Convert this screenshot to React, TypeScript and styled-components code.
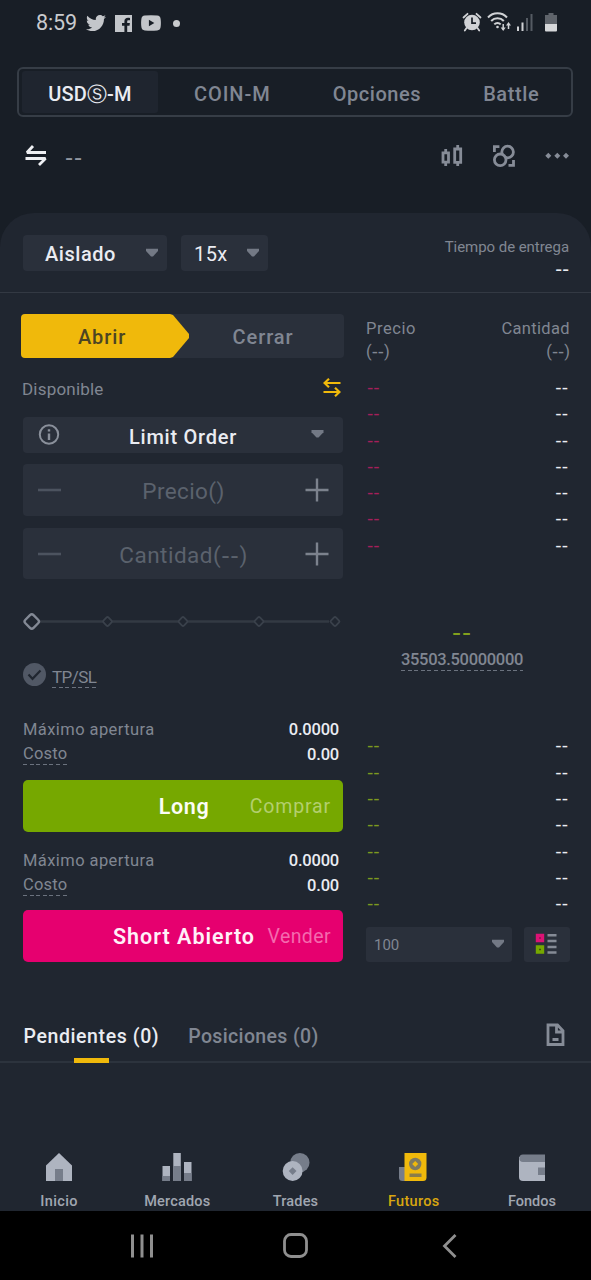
import React from "react";
import styled, { createGlobalStyle, css } from "styled-components";
import { FaTwitter } from "react-icons/fa";

const c = {
  top: "#181e26",
  panel: "#202630",
  field: "#2a303b",
  grey: "#808692",
  dim: "#5b626d",
  white: "#eaecf2",
  yellow: "#f0b90b",
  green: "#76a800",
  pink: "#e6006f",
};

const Global = createGlobalStyle`
  *, *::before, *::after { box-sizing: border-box; }
  body { margin: 0; background: #000; font-family: Roboto, "Liberation Sans", sans-serif; }
  svg { display: block; flex: none; }
`;

const Screen = styled.div`
  width: 100%;
  height: 1280px;
  display: flex;
  flex-direction: column;
  overflow: hidden;
  background: ${c.top};
`;

interface TextProps {
  $size?: number;
  $ls?: number;
  $color?: string;
  $weight?: number;
}
const Text = styled.span<TextProps>`
  font-size: ${(p) => p.$size ?? 16.5}px;
  letter-spacing: ${(p) => p.$ls ?? 0}px;
  color: ${(p) => p.$color ?? c.grey};
  font-weight: ${(p) => p.$weight ?? 400};
  line-height: 20px;
  white-space: nowrap;
`;

const Dashes = styled(Text)`
  font-family: "DejaVu Sans", sans-serif;
`;

const Dotted = styled.span<{ $w: number }>`
  display: inline-flex;
  width: ${(p) => p.$w}px;
  padding-bottom: 1px;
  background: repeating-linear-gradient(90deg, #6b727e 0 4px, transparent 4px 6.6px) 0 100% / 100% 1px no-repeat;
`;

/* Status bar */
const StatusBar = styled.header`
  height: 46px;
  flex: none;
  display: flex;
  align-items: center;
  padding: 0 34px 0 36px;
`;
const StatusLeft = styled.div`
  display: flex;
  align-items: center;
  gap: 9px;
  flex: 1;
`;
const StatusRight = styled.div`
  display: flex;
  align-items: center;
  padding-bottom: 2px;
`;
const WifiSlot = styled.span`
  margin: 0 6px 0 5px;
`;
const BatterySlot = styled.span`
  margin-left: 12px;
`;
const MoreDot = styled.i`
  width: 7px;
  height: 7px;
  border-radius: 50%;
  background: #c9cbce;
  margin-left: 3px;
`;

/* Market tabs */
const MarketTabs = styled.nav`
  margin: 21px 18px 0 17px;
  height: 50px;
  flex: none;
  display: flex;
  align-items: center;
  border: 2px solid #363d46;
  border-radius: 6px;
  padding: 0 0 0 3px;
`;
const MarketTab = styled.div<{ $active?: boolean }>`
  height: 42px;
  flex: none;
  display: flex;
  align-items: center;
  margin-right: 62px;
  padding-top: 3px;
  ${(p) =>
    p.$active &&
    css`
      width: 136px;
      margin-right: 36px;
      justify-content: center;
      background: #1f252f;
      border-radius: 3px;
    `}
`;
const CircledS = styled.span`
  font-family: "DejaVu Sans", sans-serif;
  font-size: 20px;
  font-weight: 400;
  line-height: 0;
  letter-spacing: 0;
`;

const SymbolRow = styled.div`
  height: 96px;
  flex: none;
  display: flex;
  align-items: flex-start;
  padding: 26px 22px 0 24px;
`;
const SymbolName = styled.div`
  flex: 1;
  padding: 4px 0 0 17px;
`;
const SymbolTools = styled.div`
  display: flex;
  align-items: center;
  gap: 29px;
  padding-top: 1px;
`;

/* Main panel */
const Panel = styled.main`
  flex: 1;
  min-height: 0;
  display: flex;
  flex-direction: column;
  background: ${c.panel};
  border-radius: 34px 34px 0 0;
`;
const ModeBar = styled.div`
  height: 80px;
  flex: none;
  display: flex;
  align-items: flex-start;
  padding: 22px 22px 0 23px;
  border-bottom: 1px solid #333943;
`;
const Picker = styled.div<{ $w: number; $pl: number }>`
  width: ${(p) => p.$w}px;
  height: 36px;
  margin-right: 14px;
  padding: 2px 8px 0 ${(p) => p.$pl}px;
  display: flex;
  align-items: center;
  justify-content: space-between;
  background: ${c.field};
  border-radius: 4px;
`;
const PickerCaret = styled.span`
  padding-bottom: 4px;
`;
const Delivery = styled.div`
  flex: 1;
  display: flex;
  flex-direction: column;
  align-items: flex-end;
  gap: 2px;
  padding-top: 2px;
`;

const Trade = styled.section`
  display: flex;
  justify-content: space-between;
  height: 669px;
  flex: none;
  padding: 0 21px 0 23px;
`;
const OrderForm = styled.div`
  width: 320px;
  display: flex;
  flex-direction: column;
`;
const OpenClose = styled.div`
  height: 44px;
  margin: 21px -1px 0 -2px;
  display: flex;
  background: ${c.field};
  border-radius: 4px;
`;
const OpenTab = styled.div`
  width: 169px;
  display: grid;
  place-items: center;
  padding: 2px 7px 0 0;
  background: ${c.yellow};
  border-radius: 4px 0 0 4px;
  clip-path: polygon(0 0, 149px 0, 152px 1px, 168px 20px, 168px 24px, 152px 43px, 149px 44px, 0 44px);
`;
const CloseTab = styled.div`
  flex: 1;
  display: grid;
  place-items: center;
  padding: 2px 8px 0 0;
`;
const Available = styled.div`
  height: 20px;
  margin: 21px 2px 0 -1px;
  display: flex;
  align-items: center;
  justify-content: space-between;
`;
const TransferSlot = styled.span`
  padding-bottom: 2px;
`;
const Field = styled.div<{ $h: number; $mt: number }>`
  height: ${(p) => p.$h}px;
  margin-top: ${(p) => p.$mt}px;
  padding: 0 14px;
  display: flex;
  align-items: center;
  justify-content: space-between;
  background: ${c.field};
  border-radius: 4px;
`;
const FieldLabel = styled.div`
  padding-top: 5px;
  line-height: 20px;
`;
const SliderRow = styled.div`
  height: 20px;
  margin-top: 32px;
`;
const TpSl = styled.div`
  height: 25px;
  margin-top: 32px;
  display: flex;
  align-items: flex-start;
  gap: 6px;
`;
const TpSlLabel = styled.div`
  padding-top: 4px;
  line-height: 0;
`;
const Figures = styled.dl<{ $mt: number }>`
  margin: ${(p) => p.$mt}px 4px 0 0;
`;
const Figure = styled.div`
  height: 25px;
  display: flex;
  align-items: center;
  justify-content: space-between;
`;
const Submit = styled.button<{ $bg: string; $mt: number }>`
  height: 52px;
  margin-top: ${(p) => p.$mt}px;
  padding: 3px 12px 0;
  border: 0;
  border-radius: 5px;
  background: ${(p) => p.$bg};
  display: flex;
  align-items: center;
  justify-content: flex-end;
  font-family: inherit;
`;
const SubmitMain = styled(Text)<{ $gap: number }>`
  margin-right: ${(p) => p.$gap}px;
`;

/* Order book */
const Book = styled.div`
  width: 204px;
  display: flex;
  flex-direction: column;
`;
const BookHead = styled.div`
  margin-top: 23.5px;
  display: flex;
  justify-content: space-between;
`;
const BookHeadCell = styled.div<{ $end?: boolean }>`
  display: flex;
  flex-direction: column;
  align-items: ${(p) => (p.$end ? "flex-end" : "flex-start")};
  & > span {
    line-height: 23.5px;
  }
`;
const BookRows = styled.div<{ $mt: number }>`
  margin-top: ${(p) => p.$mt}px;
`;
const BookRow = styled.div`
  height: 26.28px;
  display: flex;
  align-items: center;
  justify-content: space-between;
  padding: 0 2px 0 1px;
`;
const MidPrice = styled.div`
  height: 174.5px;
  padding: 65px 12px 0 0;
  display: flex;
  flex-direction: column;
  align-items: center;
  gap: 7.5px;
`;
const BookTools = styled.div`
  margin-top: 10.5px;
  display: flex;
  justify-content: space-between;
`;
const Depth = styled.div`
  width: 146px;
  height: 35px;
  padding: 2px 7px 0 8px;
  display: flex;
  align-items: center;
  justify-content: space-between;
  background: ${c.field};
  border-radius: 3px;
`;
const DepthCaret = styled.span`
  padding-bottom: 4px;
`;
const BookMode = styled.div`
  width: 46px;
  height: 35px;
  display: grid;
  place-items: center;
  padding-right: 2px;
  background: ${c.field};
  border-radius: 3px;
`;

/* Orders tabs */
const OrdersTabs = styled.div`
  height: 53px;
  margin-top: 48px;
  flex: none;
  display: flex;
  align-items: center;
  gap: 29px;
  padding: 2px 26.5px 0 23.5px;
  border-bottom: 2px solid #2c333d;
`;
const OrdersTab = styled.div<{ $active?: boolean }>`
  position: relative;
  ${(p) =>
    p.$active &&
    css`
      &::after {
        content: "";
        position: absolute;
        left: 50.5px;
        bottom: -16px;
        width: 35px;
        height: 5px;
        background: ${c.yellow};
      }
    `}
`;
const OrdersDoc = styled.div`
  margin-left: auto;
  padding-bottom: 4px;
`;

/* Bottom bars */
const AppNav = styled.nav`
  margin-top: auto;
  height: 58px;
  display: flex;
  overflow: hidden;
`;
const NavItem = styled.div`
  flex: 1;
  display: flex;
  flex-direction: column;
  align-items: center;
  gap: 11px;
`;
const SystemNav = styled.footer`
  height: 69px;
  flex: none;
  background: #000;
  display: flex;
  justify-content: center;
  align-items: center;
  gap: 129px;
`;

const Caret = () => (
  <svg width="14" height="9" viewBox="0 0 14 9">
    <path d="M1 .8h12v2.3L8 8.4H6L1 3.100z" fill="#737985" />
  </svg>
);
const Plus = () => (
  <svg width="24" height="24" viewBox="0 0 24 24" stroke="#7c828d" strokeWidth="2.4">
    <path d="M0.500 12h23M12 .5v23" />
  </svg>
);
const Minus = () => (
  <svg width="25" height="24" viewBox="0 0 25 24" stroke="#4c535f" strokeWidth="2.600">
    <path d="M1 12h23" />
  </svg>
);

const marks = [84.5, 160, 236, 312];

const icons = {
  home: (
    <svg width="28" height="28" viewBox="0 0 28 28">
      <path d="M14 0 27 12.500V28H1V12.500z" fill="#aeb4c0" />
      <path d="M10 16h8v12h-8z" fill="#767d8a" />
    </svg>
  ),
  bars: (
    <svg width="30" height="28" viewBox="0 0 30 28">
      <path d="M.5 13h7.500v15H.5zM11.300 0h7.500v28h-7.500zM22 9h7.500v19H22z" fill="#aeb4c0" />
      <path d="M.5 23h7.500v5H.5zM11.300 13h7.500v15h-7.500zM22 20h7.500v8H22z" fill="#767d8a" />
    </svg>
  ),
  coins: (
    <svg width="28" height="28" viewBox="0 0 28 29">
      <circle cx="18" cy="10" r="10" fill="#767d8a" />
      <circle cx="10.500" cy="18.700" r="10.300" fill="#aeb4c0" />
      <path d="m10.500 14.700 4 4-4 4-4-4z" fill="#767d8a" />
    </svg>
  ),
  futures: (
    <svg width="30" height="28" viewBox="0 0 30 28">
      <path d="M0 14h8v14H3.500A3.500 3.500 0 0 1 0 24.500z" fill="#767d8a" />
      <path d="M5.500 0h22v24.500a3.500 3.500 0 0 1-3.500 3.500H5.500V0z" fill="#f0b90b" />
      <circle cx="16.200" cy="11" r="6.200" fill="#7f7a60" />
      <path d="m16.200 8 3 3-3 3-3-3z" fill="#f0b90b" />
      <path d="M10.500 20.500h12v3.500h-12z" fill="#8a7d4a" />
    </svg>
  ),
  wallet: (
    <svg width="28" height="28" viewBox="0 0 28 28">
      <path d="M1 4h26v24H5a4 4 0 0 1-4-4z" fill="#aeb4c0" />
      <path d="M5 1.500h22V9H5a3.700 3.700 0 0 1 0-7.500z" fill="#767d8a" />
      <path d="M20 14.500h7V22h-7z" fill="#767d8a" />
    </svg>
  ),
};

const navItems = [
  { label: "Inicio", icon: icons.home, ls: 0.4 },
  { label: "Mercados", icon: icons.bars, ls: 0.2 },
  { label: "Trades", icon: icons.coins, ls: 0.15 },
  { label: "Futuros", icon: icons.futures, ls: 0.3, active: true },
  { label: "Fondos", icon: icons.wallet, ls: 0 },
];

const OrderFigures = ({ mt }: { mt: number }) => (
  <Figures $mt={mt}>
    <Figure>
      <Text $ls={0.42}>Máximo apertura</Text>
      <Text $ls={-0.2} $color={c.white} $weight={500}>0.0000</Text>
    </Figure>
    <Figure>
      <Dotted $w={44}>
        <Text $ls={0.2}>Costo</Text>
      </Dotted>
      <Text $ls={-0.2} $color={c.white} $weight={500}>0.00</Text>
    </Figure>
  </Figures>
);

const Rows = ({ color, mt }: { color: string; mt: number }) => (
  <BookRows $mt={mt}>
    {Array.from({ length: 7 }, (_, i) => (
      <BookRow key={i}>
        <Dashes $size={17.5} $color={color}>--</Dashes>
        <Dashes $size={17.5} $color={c.white}>--</Dashes>
      </BookRow>
    ))}
  </BookRows>
);

export default function App() {
  return (
    <>
      <Global />
      <Screen>
        <StatusBar>
          <StatusLeft>
            <Text $size={21.5} $ls={-0.1} $color="#c9cbce">8:59</Text>
            <FaTwitter size={20} color="#c3c6ca" />
            <svg width="17" height="17" viewBox="0 0 17 17">
              <path d="M0 0h17v17h-4.800v-6.300h2.300l.4-2.600h-2.700V6.500c0-.8.300-1.300 1.400-1.300h1.400V2.900C14.500 2.800 13.800 2.700 13 2.700c-2.200 0-3.600 1.300-3.600 3.600v1.800H7v2.600h2.400V17H0z" fill="#c3c6ca" />
            </svg>
            <svg width="20" height="16" viewBox="0 0 21 16" preserveAspectRatio="none">
              <path fillRule="evenodd" d="M4 .6Q10.500-.2 17 .6q3.300.3 3.600 3.400.6 4 0 8-.3 3.100-3.600 3.400-6.500.8-13 0Q.7 15.100.4 12q-.6-4 0-8Q.7.900 4 .600zM8.300 4.800v6.400L14 8z" fill="#c3c6ca" />
            </svg>
            <MoreDot />
          </StatusLeft>
          <StatusRight>
            <svg width="20" height="20" viewBox="0 0 20 20" fill="none" stroke="#d0d2d5" strokeWidth="1.800">
              <circle cx="10" cy="10.500" r="7.800" fill="#d0d2d5" stroke="none" />
              <path d="M1.500 5.500 5.500 1.800M18.500 5.500l-4-3.700M4.500 16 2.800 18.500M15.500 16l1.700 2.500" strokeLinecap="round" />
              <path d="M10 5.500v5.700h4" stroke={c.top} strokeWidth="1.700" />
            </svg>
            <WifiSlot>
              <svg width="24" height="20" viewBox="0 0 24 20" fill="none" stroke="#d0d2d5" strokeWidth="2">
                <path d="M1 5.500a13 13 0 0 1 19 0M4.200 9a8.600 8.600 0 0 1 12.600 0M7.300 12.400a4.600 4.600 0 0 1 6.400 0" />
                <circle cx="10.500" cy="15" r="1.300" fill="#d0d2d5" stroke="none" />
                <path d="M16.200 12v5.500M21.500 17v-5" strokeWidth="1.500" />
                <path d="M13.700 15.500h5l-2.500 3.500zM19 13.500h5L21.500 10z" fill="#d0d2d5" stroke="none" />
              </svg>
            </WifiSlot>
            <svg width="16" height="18" viewBox="0 0 16 18">
              <path d="M0 13.500h2V18H0zM4.500 9.500h2V18h-2z" fill="#d0d2d5" />
              <path d="M9 5h2v13H9zM13.500 1h2v17h-2z" fill="#555b63" />
            </svg>
            <BatterySlot>
              <svg width="12" height="19" viewBox="0 0 12 19">
                <path d="M3.500 0h5v2H12v9H0V2h3.500z" fill="#5f646b" />
                <path d="M0 11h12v6.500a1 1 0 0 1-1 1H1a1 1 0 0 1-1-1z" fill="#d6d8da" />
              </svg>
            </BatterySlot>
          </StatusRight>
        </StatusBar>

        <MarketTabs>
          <MarketTab $active>
            <Text $size={20} $ls={0.2} $color={c.white} $weight={500}>
              USD<CircledS>Ⓢ</CircledS>-M
            </Text>
          </MarketTab>
          <MarketTab><Text $size={20} $ls={0.95} $weight={500}>COIN-M</Text></MarketTab>
          <MarketTab><Text $size={20} $ls={0.55} $weight={500}>Opciones</Text></MarketTab>
          <MarketTab><Text $size={20} $ls={0.6} $weight={500}>Battle</Text></MarketTab>
        </MarketTabs>

        <SymbolRow>
          <svg width="24" height="25" viewBox="0 0 24 25" fill="none" stroke="#eef0f3" strokeWidth="2.800">
            <path d="M22 9.500H3L9 3M1.500 15.500h20l-6.500 6.500" strokeLinejoin="bevel" />
          </svg>
          <SymbolName>
            <Dashes $size={22.5} $ls={0.8} $color="#8f959f">--</Dashes>
          </SymbolName>
          <SymbolTools>
            <svg width="22" height="24" viewBox="0 0 22 24" fill="none" stroke="#868c97" strokeWidth="2.800">
              <path d="M2 8.900h5.500v9.200H2zM4.700 5v4M4.700 18v4M13.700 5h6v13.400h-6zM16.700 1v4M16.700 18v4" />
            </svg>
            <svg width="24" height="24" viewBox="0 0 24 24" fill="none" stroke="#868c97" strokeWidth="2.800">
              <circle cx="15.600" cy="8" r="5.800" />
              <circle cx="8.200" cy="15.800" r="5.800" fill={c.top} />
              <path d="M2.400 8V2.600h5M21.500 16v5.300h-5" />
            </svg>
            <svg width="24" height="8" viewBox="0 0 24 8" fill="#868c97">
              <path d="m3.300.8 3 3-3 3-3-3zM12.300.8l3 3-3 3-3-3zM21 .8l3 3-3 3-3-3z" />
            </svg>
          </SymbolTools>
        </SymbolRow>

        <Panel>
          <ModeBar>
            <Picker $w={144} $pl={22}>
              <Text $size={20} $ls={0.55} $color={c.white} $weight={500}>Aislado</Text>
              <PickerCaret><Caret /></PickerCaret>
            </Picker>
            <Picker $w={87} $pl={13}>
              <Text $size={20} $ls={0.4} $color={c.white}>15x</Text>
              <PickerCaret><Caret /></PickerCaret>
            </Picker>
            <Delivery>
              <Text $size={15} $ls={-0.05}>Tiempo de entrega</Text>
              <Dashes $size={19} $color={c.white}>--</Dashes>
            </Delivery>
          </ModeBar>

          <Trade>
            <OrderForm>
              <OpenClose>
                <OpenTab><Text $size={20} $ls={0.9} $color="#4d4523" $weight={500}>Abrir</Text></OpenTab>
                <CloseTab><Text $size={20} $ls={0.9} $weight={500}>Cerrar</Text></CloseTab>
              </OpenClose>
              <Available>
                <Text $size={17} $ls={0.2}>Disponible</Text>
                <TransferSlot>
                  <svg width="18" height="20" viewBox="0 0 18 20" fill="none" stroke={c.yellow} strokeWidth="2.2">
                    <path d="M17.500 5H1.500M6 .8 1.500 5 6 9.300M.5 14h16M12 9.700l4.500 4.300-4.500 4.200" />
                  </svg>
                </TransferSlot>
              </Available>
              <Field $h={36} $mt={18}>
                <svg width="23" height="22" viewBox="0 0 23 22" fill="none" stroke="#8a909b" strokeWidth="2">
                  <circle cx="12" cy="10.500" r="9.200" />
                  <path d="M12 9.500V16M12 5.200v2.300" strokeWidth="2.400" />
                </svg>
                <FieldLabel><Text $size={20} $ls={0.75} $color={c.white} $weight={500}>Limit Order</Text></FieldLabel>
                <svg width="23" height="12" viewBox="0 0 23 12">
                  <path d="M5.500 1h12v2.300l-5 5.200h-2l-5-5.200z" fill="#737985" />
                </svg>
              </Field>
              <Field $h={52} $mt={11}>
                <Minus />
                <FieldLabel><Text $size={22.5} $ls={0.4} $color={c.dim}>Precio()</Text></FieldLabel>
                <Plus />
              </Field>
              <Field $h={51} $mt={12}>
                <Minus />
                <FieldLabel>
                  <Text $size={22.5} $ls={0.5} $color={c.dim}>
                    Cantidad(<Dashes $size={23.5} $ls={0.6} $color={c.dim}>--</Dashes>)
                  </Text>
                </FieldLabel>
                <Plus />
              </Field>
              <SliderRow>
                <svg width="320" height="20" viewBox="0 0 320 20" fill="none">
                  <path d="M17 10.500H306" stroke="#333a43" strokeWidth="2.500" />
                  <rect x="3" y="4.700" width="11.500" height="11.500" rx="2.500" transform="rotate(45 8.700 10.500)" stroke="#838995" strokeWidth="2.400" />
                  {marks.map((x) => (
                    <rect key={x} x={x - 3.5} y="7" width="7" height="7" rx="1.300" transform={`rotate(45 ${x} 10.500)`} fill={c.panel} stroke="#3a414b" strokeWidth="1.800" />
                  ))}
                </svg>
              </SliderRow>
              <TpSl>
                <svg width="23" height="23" viewBox="0 0 23 23">
                  <circle cx="11.500" cy="11.500" r="11.500" fill="#515865" />
                  <path d="m5.500 11.500 4 4.300L17.500 7.500" fill="none" stroke={c.panel} strokeWidth="2.200" />
                </svg>
                <TpSlLabel>
                  <Dotted $w={44}><Text $size={17} $ls={-0.55}>TP/SL</Text></Dotted>
                </TpSlLabel>
              </TpSl>
              <OrderFigures mt={29} />
              <Submit $bg={c.green} $mt={12.5}>
                <SubmitMain $size={21.5} $ls={0.6} $gap={40.5} $color="#fbfdf5" $weight={600}>Long</SubmitMain>
                <Text $size={19.5} $ls={0.85} $color="#b3cf6e">Comprar</Text>
              </Submit>
              <OrderFigures mt={16.5} />
              <Submit $bg={c.pink} $mt={11.5}>
                <SubmitMain $size={21.5} $ls={1} $gap={12.5} $color="#fff0f8" $weight={600}>Short Abierto</SubmitMain>
                <Text $size={19.5} $ls={0.4} $color="#f46aae">Vender</Text>
              </Submit>
            </OrderForm>

            <Book>
              <BookHead>
                <BookHeadCell>
                  <Text $ls={0.55}>Precio</Text>
                  <Text>(<Dashes $size={17}>--</Dashes>)</Text>
                </BookHeadCell>
                <BookHeadCell $end>
                  <Text $ls={0.35}>Cantidad</Text>
                  <Text>(<Dashes $size={17}>--</Dashes>)</Text>
                </BookHeadCell>
              </BookHead>
              <Rows color="#a51f5a" mt={10.5} />
              <MidPrice>
                <Dashes $size={25} $ls={1} $color="#82a01c">--</Dashes>
                <Dotted $w={122}><Text $ls={-0.32} $weight={500}>35503.50000000</Text></Dotted>
              </MidPrice>
              <Rows color="#7d991f" mt={0} />
              <BookTools>
                <Depth>
                  <Text $size={15}>100</Text>
                  <DepthCaret><Caret /></DepthCaret>
                </Depth>
                <BookMode>
                  <svg width="22" height="22" viewBox="0 0 22 22">
                    <path d="M2.500 2.500h5v5h-5z" fill="#7c1147" stroke="#dc1275" strokeWidth="3.400" />
                    <path d="M2.500 14h5v5h-5z" fill="#32430f" stroke="#76a800" strokeWidth="3.400" />
                    <path d="M12.500 2.200h9M12.500 8h9M12.500 14h9M12.500 19.500h9" stroke="#858b96" strokeWidth="2.600" />
                  </svg>
                </BookMode>
              </BookTools>
            </Book>
          </Trade>

          <OrdersTabs>
            <OrdersTab $active><Text $size={19.5} $ls={0.6} $color={c.white} $weight={500}>Pendientes (0)</Text></OrdersTab>
            <OrdersTab><Text $size={19.5} $ls={0.35} $weight={500}>Posiciones (0)</Text></OrdersTab>
            <OrdersDoc>
              <svg width="19" height="24" viewBox="0 0 19 24" fill="none" stroke="#868c97" strokeWidth="2.800">
                <path d="M2 2h9.500L17 7.800V21.500H2zM10.500 2v7H17M6.500 16.500h6" />
              </svg>
            </OrdersDoc>
          </OrdersTabs>

          <AppNav>
            {navItems.map((n) => (
              <NavItem key={n.label}>
                {n.icon}
                <Text $size={14.5} $ls={n.ls} $weight={500} $color={n.active ? "#d9a60f" : "#a0a6b1"}>{n.label}</Text>
              </NavItem>
            ))}
          </AppNav>
        </Panel>

        <SystemNav>
          <svg width="24" height="24" viewBox="0 0 24 24" stroke="#8f8f8f" strokeWidth="3">
            <path d="M2.500.500v23M12 .5v23M21.500.500v23" />
          </svg>
          <svg width="25" height="25" viewBox="0 0 25 25" fill="none" stroke="#8f8f8f" strokeWidth="2.800">
            <rect x="1.500" y="1.500" width="22" height="22" rx="6.500" />
          </svg>
          <svg width="24" height="24" viewBox="0 0 24 24" fill="none" stroke="#8f8f8f" strokeWidth="2.800">
            <path d="M18.500 1 7.500 12l11 11" />
          </svg>
        </SystemNav>
      </Screen>
    </>
  );
}
